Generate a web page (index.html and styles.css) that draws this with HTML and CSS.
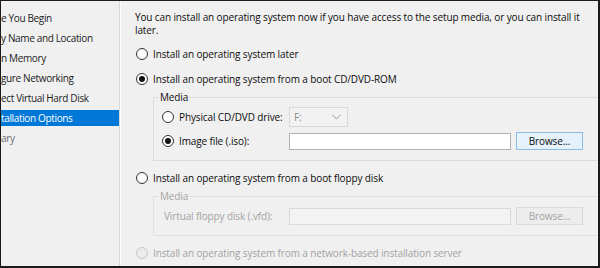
FILE: index.html
```html
<!DOCTYPE html>
<html>
<head>
<meta charset="utf-8">
<title>Installation Options</title>
<link rel="stylesheet" href="styles.css">
</head>
<body>
<div class="frame">
  <nav class="steps">
    <div class="step">e You Begin</div>
    <div class="step">y Name and Location</div>
    <div class="step">n Memory</div>
    <div class="step">gure Networking</div>
    <div class="step">ect Virtual Hard Disk</div>
    <div class="step active">tallation Options</div>
    <div class="step future">ary</div>
  </nav>
  <main class="content">
    <p class="intro">You can install an operating system now if you have access to the setup media, or you can install it<br>later.</p>

    <div class="opt"><span class="radio"></span>Install an operating system later</div>
    <div class="opt"><span class="radio on"></span>Install an operating system from a boot CD/DVD-ROM</div>

    <div class="group">
      <span class="legend">Media</span>
      <div class="grow first">
        <div class="sub"><span class="radio"></span>Physical CD/DVD drive:</div>
        <div class="combo">F:<svg class="chev" width="9" height="6" viewBox="0 0 9 6"><path d="M0.5 0.8 L4.5 4.8 L8.5 0.8" fill="none" stroke="#b4b4b4" stroke-width="1.1"/></svg></div>
      </div>
      <div class="grow">
        <div class="sub"><span class="radio on"></span>Image file (.iso):</div>
        <div class="field"></div>
        <div class="btn">Browse...</div>
      </div>
    </div>

    <div class="opt"><span class="radio"></span>Install an operating system from a boot floppy disk</div>

    <div class="group off">
      <span class="legend">Media</span>
      <div class="grow first">
        <div class="sub plain">Virtual floppy disk (.vfd):</div>
        <div class="field"></div>
        <div class="btn">Browse...</div>
      </div>
    </div>

    <div class="opt off"><span class="radio"></span>Install an operating system from a network-based installation server</div>
  </main>
</div>
</body>
</html>
```

FILE: styles.css
```css
html, body {
  margin: 0;
  padding: 0;
  background: #f0f0f0;
}

.frame {
  width: 600px;
  height: 268px;
  box-sizing: border-box;
  border-style: solid;
  border-color: #1b1b1b;
  border-width: 1px 2px 2px 1px;
  background: #f0f0f0;
  display: flex;
  overflow: hidden;
  font-family: "Open Sans", "Noto Sans", sans-serif;
  font-size: 10px;
  letter-spacing: -0.12px;
  color: #0d0d0d;
}

/* left step list */
.steps {
  width: 118px;
  flex: none;
  border-right: 1px solid #d8d8d8;
  padding-top: 9px;
}

.step {
  height: 16px;
  line-height: 16px;
  margin-bottom: 4px;
  white-space: nowrap;
  overflow: hidden;
  letter-spacing: -0.35px;
  color: #222;
}

.step.active {
  background: #0078d7;
  color: #fff;
}

.step.future {
  color: #6d6d6d;
}

/* right content */
.content {
  flex: 1;
  min-width: 0;
  border-left: 1px solid #fbfbfb;
  padding: 10px 0 0 14px;
  overflow: hidden;
}

.intro {
  margin: 0;
  line-height: 13px;
  white-space: nowrap;
}

.opt {
  display: flex;
  align-items: center;
  height: 16px;
  margin-top: 9px;
  white-space: nowrap;
}

.radio {
  width: 12px;
  height: 12px;
  box-sizing: border-box;
  border: 1px solid #333;
  border-radius: 50%;
  background: #fff;
  margin: 0 5px 0 1px;
  flex: none;
  display: grid;
  place-items: center;
}

.radio.on::after {
  content: "";
  width: 6px;
  height: 6px;
  border-radius: 50%;
  background: #111;
}

.opt.off {
  color: #a3a3a3;
}

.opt.off .radio {
  border-color: #c6c6c6;
  background: #ececec;
}

/* group boxes */
.group {
  margin: 10px -40px 0 18px;
  border: 1px solid #dcdcdc;
  padding: 0 0 10px 8px;
}

.legend {
  display: table;
  margin: -7px 0 0 -3px;
  padding: 0 1px;
  line-height: 13px;
  background: #f0f0f0;
}

.grow {
  display: grid;
  grid-template-columns: 122px 222px 67px;
  column-gap: 5px;
  align-items: center;
  margin-top: 5px;
}

.grow.first {
  margin-top: 3px;
}

.sub {
  display: flex;
  align-items: center;
  white-space: nowrap;
}

.sub .radio {
  margin-left: 0;
}

.sub.plain {
  padding-left: 2px;
}

.combo {
  width: 59px;
  height: 20px;
  box-sizing: border-box;
  border: 1px solid #d9d9d9;
  background: #f2f2f2;
  color: #8a8a8a;
  padding: 0 6px 0 4px;
  display: flex;
  align-items: center;
  justify-content: space-between;
}

.field {
  height: 17px;
  box-sizing: border-box;
  border: 1px solid #b2b2b2;
  background: #fff;
}

.btn {
  height: 18px;
  box-sizing: border-box;
  border: 1px solid #8cbde9;
  background: #e5f1fb;
  display: flex;
  align-items: center;
  justify-content: center;
}

.group.off {
  border-color: #e0e0e0;
  color: #a3a3a3;
}

.group.off .grow.first {
  margin-top: 4px;
}

.group.off .field {
  border-color: #dadada;
  background: #f3f3f3;
}

.group.off .btn {
  border-color: #dadada;
  background: #ededed;
}
```
